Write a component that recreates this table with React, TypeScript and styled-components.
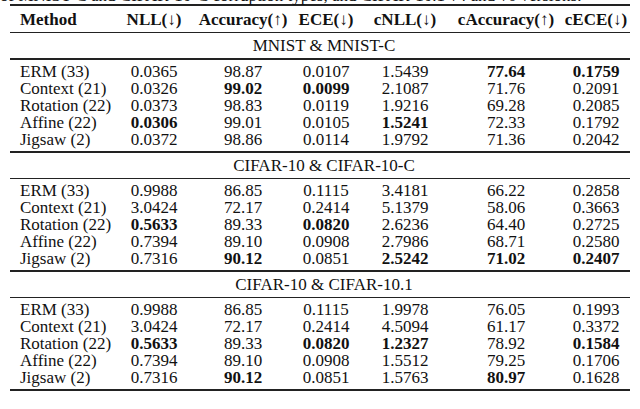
import React from 'react'
import styled, { createGlobalStyle } from 'styled-components'

const GlobalStyle = createGlobalStyle`
  html, body {
    margin: 0;
    padding: 0;
    background: #fff;
  }
  body {
    width: 640px;
    height: 409px;
    overflow: hidden;
    font-family: 'Liberation Serif', 'Times New Roman', serif;
    color: #111;
  }
`

const COLUMNS = '104px 80px 98px 68px 90px 112px 68px'
const FONT = '17px'

const Page = styled.div`
  padding: 0 10px;
`

const Caption = styled.div`
  margin: -12px 0 0 -10px;
  height: 16px;
  font-size: ${FONT};
  line-height: 16px;
  white-space: nowrap;
`

const Table = styled.div`
  border-top: 2px solid #222;
  border-bottom: 2px solid #222;
`

const Row = styled.div<{ $height?: number }>`
  display: grid;
  grid-template-columns: ${COLUMNS};
  align-items: center;
  height: ${({ $height }) => $height ?? 17}px;
  font-size: ${FONT};
  line-height: 17px;
`

const HeaderRow = styled(Row)`
  font-weight: 700;
  border-bottom: 1px solid #222;
`

const Cell = styled.div<{ $bold?: boolean; $first?: boolean }>`
  font-weight: ${({ $bold }) => ($bold ? 700 : 'inherit')};
  text-align: ${({ $first }) => ($first ? 'left' : 'center')};
  padding-left: ${({ $first }) => ($first ? '10px' : '0')};
  white-space: nowrap;
`

const SectionTitle = styled.div<{ $top?: 'thin' | 'thick'; $bottom: 'thin' | 'thick' }>`
  height: 25px;
  display: flex;
  align-items: center;
  justify-content: center;
  padding-left: 8px;
  font-size: ${FONT};
  border-top: ${({ $top }) => ($top === 'thick' ? '2px solid #222' : $top === 'thin' ? '1px solid #222' : 'none')};
  border-bottom: ${({ $bottom }) => ($bottom === 'thick' ? '2px solid #222' : '1px solid #222')};
`

const Block = styled.div`
  padding: 3px 0 3px;
`

type Value = string | [string, true]

interface Section {
  title: string
  top?: 'thin' | 'thick'
  bottom: 'thin' | 'thick'
  rows: [string, ...Value[]][]
}

const headers = ['Method', 'NLL(↓)', 'Accuracy(↑)', 'ECE(↓)', 'cNLL(↓)', 'cAccuracy(↑)', 'cECE(↓)']

const sections: Section[] = [
  {
    title: 'MNIST & MNIST-C',
    bottom: 'thick',
    rows: [
      ['ERM (33)', '0.0365', '98.87', '0.0107', '1.5439', ['77.64', true], ['0.1759', true]],
      ['Context (21)', '0.0326', ['99.02', true], ['0.0099', true], '2.1087', '71.76', '0.2091'],
      ['Rotation (22)', '0.0373', '98.83', '0.0119', '1.9216', '69.28', '0.2085'],
      ['Affine (22)', ['0.0306', true], '99.01', '0.0105', ['1.5241', true], '72.33', '0.1792'],
      ['Jigsaw (2)', '0.0372', '98.86', '0.0114', '1.9792', '71.36', '0.2042']
    ]
  },
  {
    title: 'CIFAR-10 & CIFAR-10-C',
    top: 'thick',
    bottom: 'thin',
    rows: [
      ['ERM (33)', '0.9988', '86.85', '0.1115', '3.4181', '66.22', '0.2858'],
      ['Context (21)', '3.0424', '72.17', '0.2414', '5.1379', '58.06', '0.3663'],
      ['Rotation (22)', ['0.5633', true], '89.33', ['0.0820', true], '2.6236', '64.40', '0.2725'],
      ['Affine (22)', '0.7394', '89.10', '0.0908', '2.7986', '68.71', '0.2580'],
      ['Jigsaw (2)', '0.7316', ['90.12', true], '0.0851', ['2.5242', true], ['71.02', true], ['0.2407', true]]
    ]
  },
  {
    title: 'CIFAR-10 & CIFAR-10.1',
    top: 'thick',
    bottom: 'thin',
    rows: [
      ['ERM (33)', '0.9988', '86.85', '0.1115', '1.9978', '76.05', '0.1993'],
      ['Context (21)', '3.0424', '72.17', '0.2414', '4.5094', '61.17', '0.3372'],
      ['Rotation (22)', ['0.5633', true], '89.33', ['0.0820', true], ['1.2327', true], '78.92', ['0.1584', true]],
      ['Affine (22)', '0.7394', '89.10', '0.0908', '1.5512', '79.25', '0.1706'],
      ['Jigsaw (2)', '0.7316', ['90.12', true], '0.0851', '1.5763', ['80.97', true], '0.1628']
    ]
  }
]

export default function App() {
  return (
    <>
      <GlobalStyle />
      <Page>
        <Caption>
          of MNIST-C and CIFAR-10-C corruption types, and CIFAR-10.1 v4 and v6 versions.
        </Caption>
        <Table>
          <HeaderRow $height={26}>
            {headers.map((h, i) => (
              <Cell key={h} $first={i === 0}>
                {h}
              </Cell>
            ))}
          </HeaderRow>
          {sections.map((s) => (
            <React.Fragment key={s.title}>
              <SectionTitle $top={s.top} $bottom={s.bottom}>
                {s.title}
              </SectionTitle>
              <Block>
                {s.rows.map(([method, ...values]) => (
                  <Row key={method}>
                    <Cell $first>{method}</Cell>
                    {values.map((v, i) => {
                      const [text, bold] = typeof v === 'string' ? [v, false] : v
                      return (
                        <Cell key={i} $bold={bold}>
                          {text}
                        </Cell>
                      )
                    })}
                  </Row>
                ))}
              </Block>
            </React.Fragment>
          ))}
        </Table>
      </Page>
    </>
  )
}
